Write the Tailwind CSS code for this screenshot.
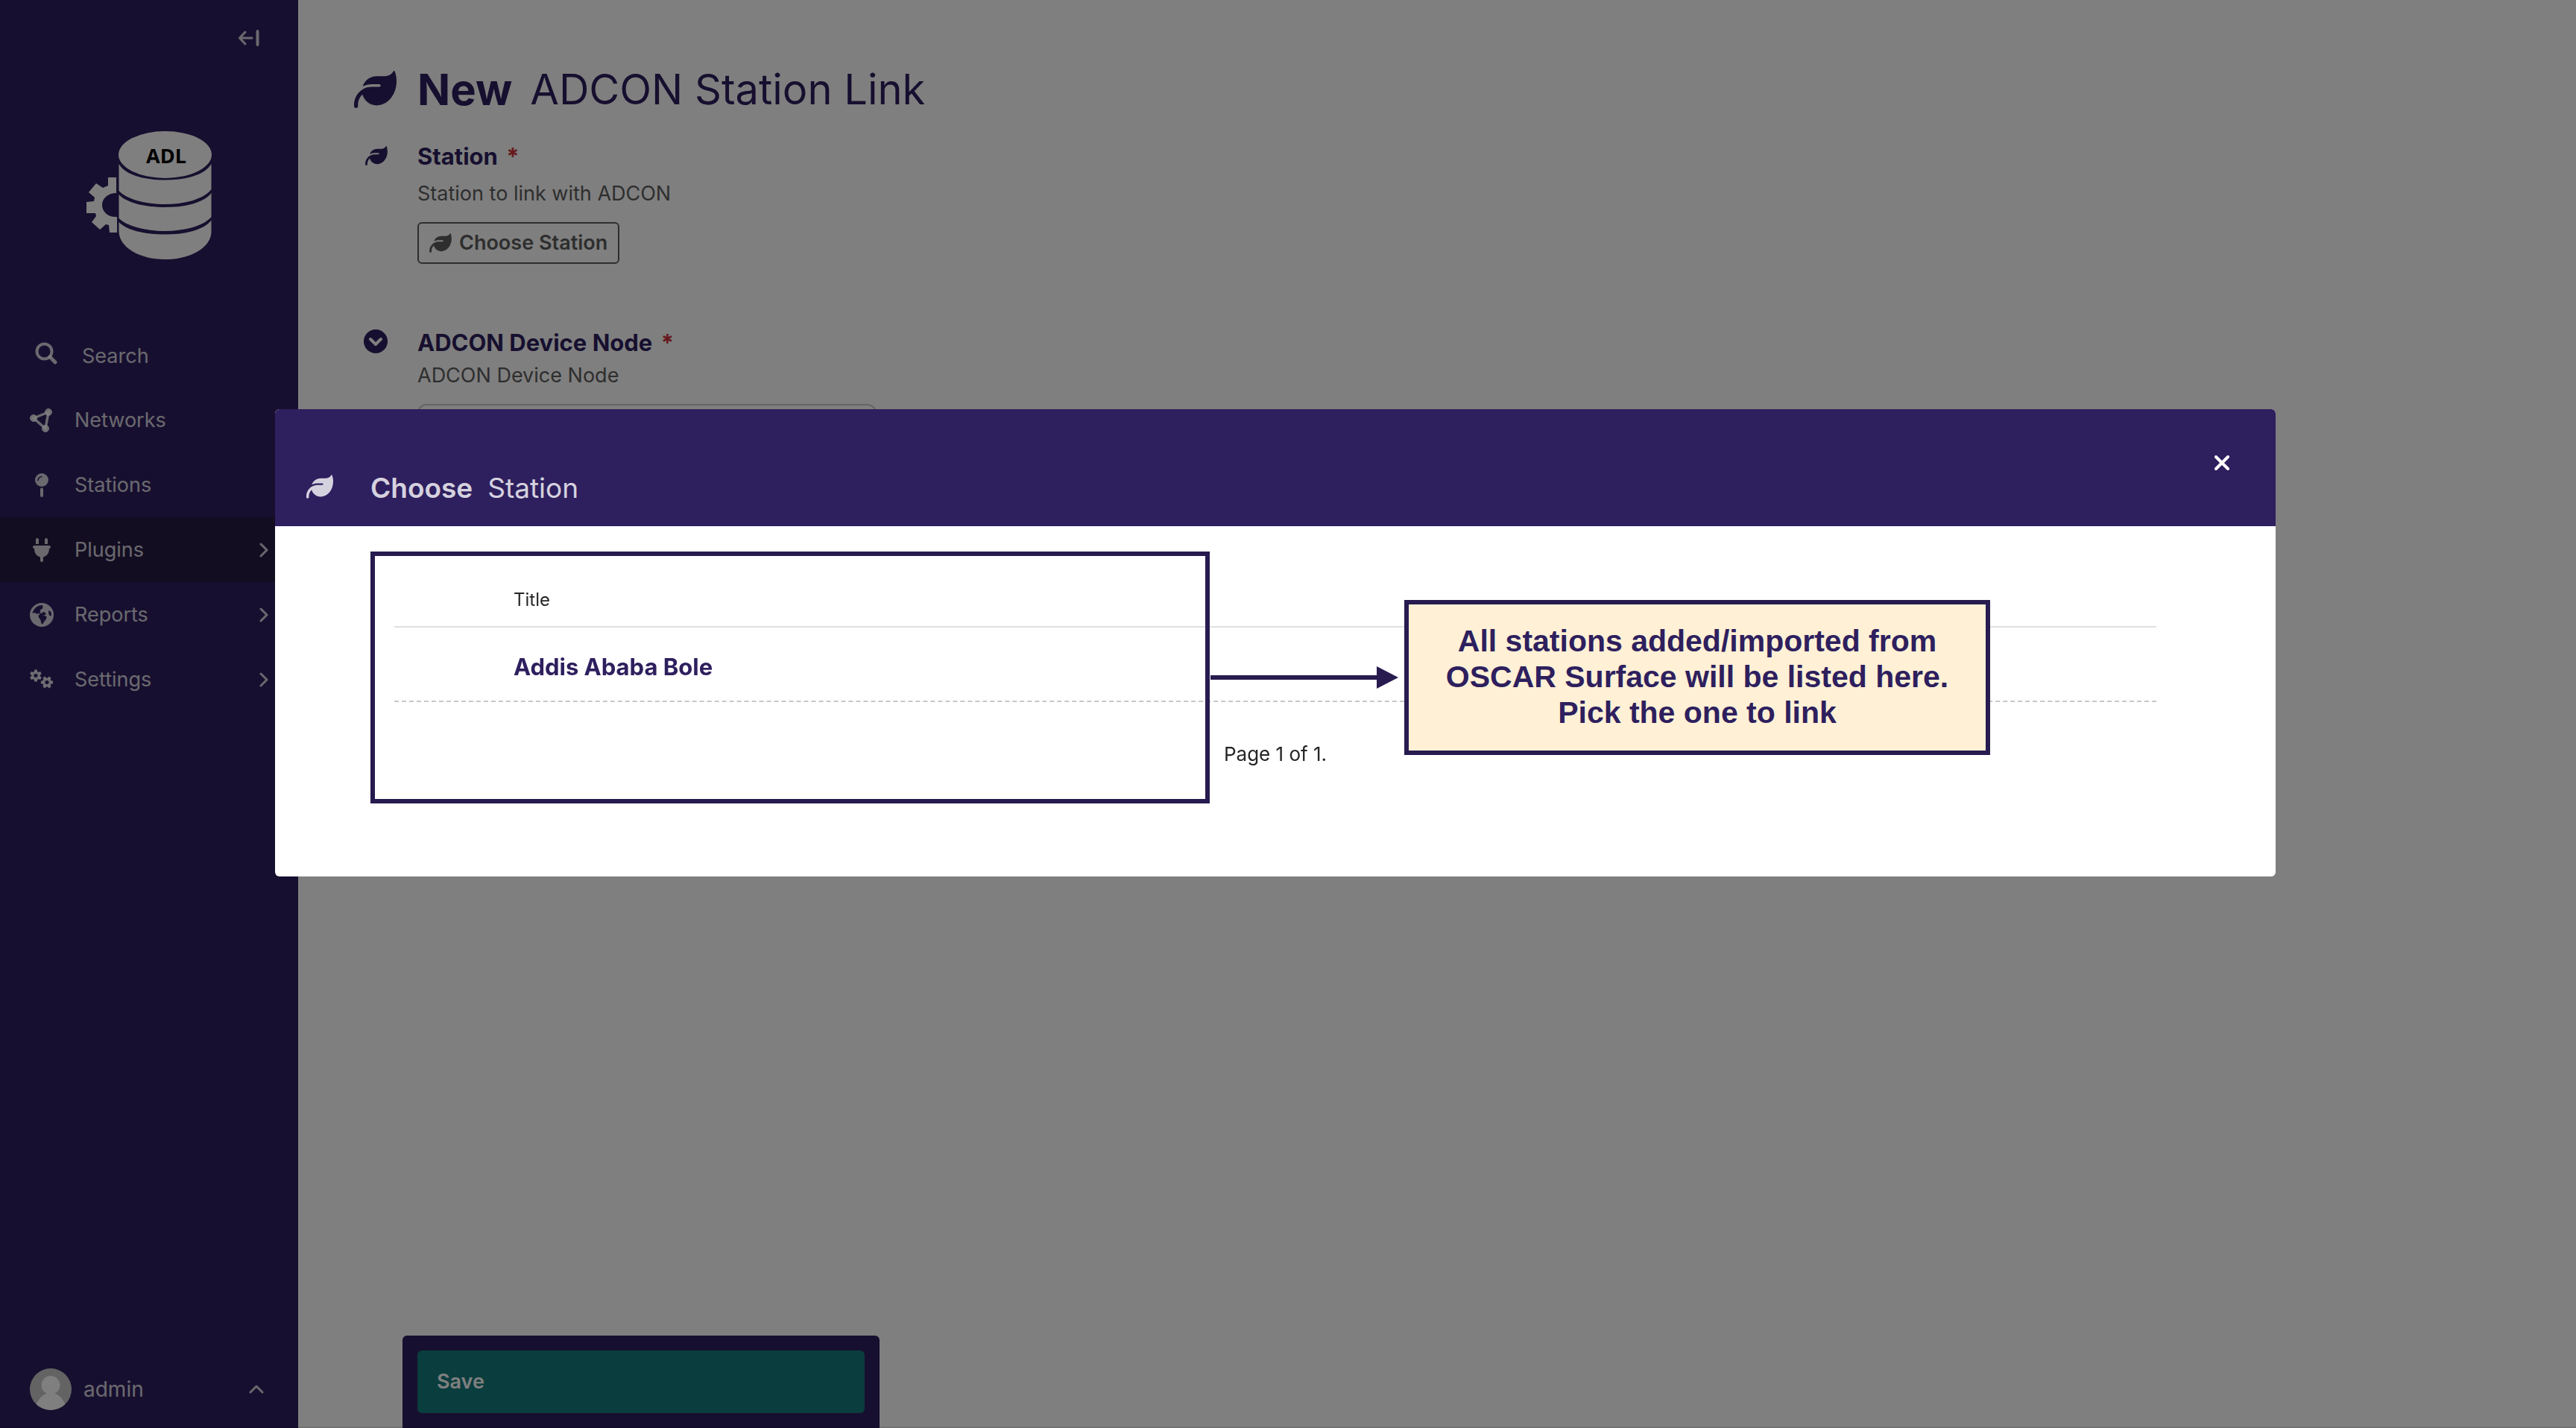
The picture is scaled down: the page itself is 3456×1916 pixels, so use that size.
<!DOCTYPE html>
<html lang="en">
<head>
<meta charset="utf-8">
<title>New ADCON Station Link</title>
<script src="https://cdn.jsdelivr.net/npm/@tailwindcss/browser@4"></script>
</head>
<body class="bg-white font-[Inter,sans-serif] text-[27px] leading-9 text-[#5c5c5c]">
<svg class="hidden" aria-hidden="true">
  <symbol id="leaf" viewBox="0 32 512 448"><path fill="currentColor" d="M272 96c-78.6 0-145.1 51.5-167.7 122.5c33.6-17 71.5-26.5 111.7-26.5h88c8.800 0 16 7.200 16 16s-7.200 16-16 16H216c-16.600 0-32.700 1.900-48.200 5.400c-25.900 5.900-50 16.400-71.400 30.700C38.300 298.800 0 364.900 0 440v16c0 13.300 10.700 24 24 24s24-10.700 24-24V440c0-48.700 20.700-92.500 53.800-123.200C121.600 392.300 190.300 448 272 448h1c132.100-.7 239-130.900 239-291.400c0-42.600-7.500-83.100-21.100-119.600c-2.600-6.900-12.700-6.600-16.200-.1C455.900 72.100 418.700 96 376 96H272z"/></symbol>
  <symbol id="chevron" viewBox="0 0 12 20"><path d="M2 2l8 8-8 8" fill="none" stroke="currentColor" stroke-width="3" stroke-linecap="round" stroke-linejoin="round"/></symbol>
</svg>

<div class="flex min-h-screen">
  <aside class="flex h-screen w-[400px] shrink-0 flex-col bg-[#2e1f5e] text-white/80">
    <button type="button" aria-label="Collapse sidebar" class="mt-10 mr-[52px] self-end">
      <svg class="h-[22px] w-7" viewBox="0 0 28 22" fill="none" stroke="currentColor" stroke-width="3" stroke-linecap="round" stroke-linejoin="round"><path d="M18 11H2M9 3L1.500 11L9 19"/><path d="M25.500 2V20" stroke-width="4"/></svg>
    </button>
    <a href="#" aria-label="ADL home" class="mt-[113px] ml-[116px] text-white">
      <svg class="h-[174px] w-[170px]" viewBox="116 175 170 174" fill="currentColor">
        <ellipse cx="221.500" cy="207.500" rx="62.500" ry="31.500"/>
        <path d="M159.500 220c8 14 32 21.500 62 21.500s54-7.500 62-21.500v34c-10 13-35 20-62 20s-52-7-62-18z"/>
        <path d="M159.500 261c10 11 35 17 62 17s52-6 62-19v32c-10 12-35 19-62 19s-52-7-62-17z"/>
        <path d="M159.500 298c10 11 35 16.500 62 16.500s52-6 62-19v15c0 22-28 37.500-62 37.500s-62-16-62-38z"/>
        <path d="M156 238h-11v11l-7 3-9-6-10 12 8 7-1 5-10 1v15h12l1 4-6 8 11 10 8-7 4 1 1 10h10v-21c-12 1-20-7-20-16s8-16 19-16z"/>
        <text x="223" y="219" text-anchor="middle" class="fill-black font-['Open_Sans',sans-serif] text-[27px] font-bold">ADL</text>
      </svg>
    </a>
    <nav class="mt-[86px] flex flex-col" aria-label="Main">
      <a href="#" class="flex h-[85px] items-center pl-[47px]"><svg class="mb-2 h-[30px] w-[30px]" viewBox="0 0 30 30" fill="none" stroke="currentColor" stroke-width="4" stroke-linecap="round"><circle cx="12.500" cy="12.500" r="10"/><path d="M20 20l7 7" stroke-width="5"/></svg><span class="ml-[33px]">Search</span></a>
      <a href="#" class="flex h-[87px] items-center gap-7 pl-10"><svg class="size-8" viewBox="0 0 32 32" fill="currentColor" stroke="currentColor"><path d="M5 13L25 5L21 27z" fill="none" stroke-width="3.500"/><circle cx="5" cy="13" r="4.500"/><circle cx="25" cy="5" r="4.500"/><circle cx="21" cy="27" r="4.500"/></svg>Networks</a>
      <a href="#" class="flex h-[87px] items-center gap-7 pl-10"><svg class="size-8" viewBox="0 0 32 32" fill="none"><circle cx="16" cy="9" r="9" fill="currentColor"/><path d="M11 9.500a5 5 0 0 1 5-5" stroke="#2e1f5e" stroke-width="1.600" stroke-linecap="round"/><path d="M16 21.500V30" stroke="currentColor" stroke-width="4" stroke-linecap="round"/></svg>Stations</a>
      <a href="#" class="flex h-[87px] items-center gap-7 bg-[#261b45] pr-10 pl-10"><svg class="size-8" viewBox="0 0 32 32" fill="currentColor"><path d="M8 2a2 2 0 0 1 4 0v6H8zM20 2a2 2 0 0 1 4 0v6h-4zM6 10h20a2 2 0 0 1 0 4c0 6-3 10-8 11.500V30a2 2 0 0 1-4 0v-4.500C9 24 6 20 6 14a2 2 0 0 1 0-4z"/></svg><span class="grow">Plugins</span><svg class="h-5 w-3"><use href="#chevron"/></svg></a>
      <a href="#" class="flex h-[87px] items-center gap-7 pr-10 pl-10"><svg class="size-8" viewBox="0 0 32 32"><circle cx="16" cy="16" r="16" fill="currentColor"/><path fill="#2e1f5e" d="M17 3C10 3 5 7.500 3.500 14l3-1 2 1.500 4-.5 2-2.500-1-2 3-1.500 1-2zM12 13.500l4 .5 2-2 3 1 .5 3-3 .5-5-.5zM11.500 16.500l4-1 3 1.500 4 1c.5 3-1.500 5-2.500 6l-3 4.500c-2-.5-2-3-2.500-5.500-1-2-3.500-3.500-3-6.500zM25 11c2-1.500 4 1.500 4 5 0 2-2.500 1.500-3.500-.5z"/></svg><span class="grow">Reports</span><svg class="h-5 w-3"><use href="#chevron"/></svg></a>
      <a href="#" class="flex h-[87px] items-center gap-7 pr-10 pl-10"><svg class="size-8" viewBox="0 0 32 32" fill="none" stroke="currentColor"><g transform="translate(8 10.500)"><circle r="4.300" stroke-width="3.400"/><path d="M0-5V-8M0 5V8M4.300-2.500L7-4M-4.300 2.500L-7 4M4.300 2.500L7 4M-4.300-2.500L-7-4" stroke-width="4"/></g><g transform="translate(23 19.500) rotate(30)"><circle r="4.300" stroke-width="3.400"/><path d="M0-5V-8M0 5V8M4.300-2.500L7-4M-4.300 2.500L-7 4M4.300 2.500L7 4M-4.300-2.500L-7-4" stroke-width="4"/></g></svg><span class="grow">Settings</span><svg class="h-5 w-3"><use href="#chevron"/></svg></a>
    </nav>
    <button type="button" class="mt-auto mb-6 flex items-center px-10 text-left">
      <svg class="size-14" viewBox="0 0 56 56"><clipPath id="disc"><circle cx="28" cy="28" r="28"/></clipPath><g clip-path="url(#disc)"><path fill="#c6c6c6" d="M0 0h56v56H0z"/><circle cx="28" cy="22.500" r="12.500" fill="#fff"/><path fill="#fff" d="M8 50c4-11 11-17 20-17s16 6 20 17v8H8z"/></g></svg>
      <span class="ml-4 grow text-[28px]">admin</span>
      <svg class="mr-[6px] h-3 w-5" viewBox="0 0 20 12"><path d="M2 10l8-8 8 8" fill="none" stroke="currentColor" stroke-width="3" stroke-linecap="round" stroke-linejoin="round"/></svg>
    </button>
  </aside>

  <main class="flex grow flex-col">
    <h1 class="mt-[84px] flex items-center pl-[75px] text-[56px] leading-[72px] text-[#2e1f5e]">
      <svg class="h-[50px] w-[57px]"><use href="#leaf"/></svg>
      <strong class="ml-7 text-[58px] font-bold">New</strong><span class="ml-6 font-normal">ADCON Station Link</span>
    </h1>
    <form class="flex grow flex-col pl-[88px]">
      <div class="mt-[34px] flex">
        <svg class="mt-[6px] ml-[2px] h-[26px] w-[30px] text-[#2e1f5e]"><use href="#leaf"/></svg>
        <div class="ml-10">
          <div class="text-[31px] leading-10 font-bold text-[#2e1f5e]">Station <span class="ml-1 text-[#cd3238]">*</span></div>
          <p class="mt-3">Station to link with ADCON</p>
          <button type="button" class="mt-5 flex h-14 items-center gap-[10px] rounded-md border-2 border-[#5c5c5c] px-[14px] font-semibold"><svg class="h-[26px] w-[30px]"><use href="#leaf"/></svg>Choose Station</button>
        </div>
      </div>
      <div class="mt-[86px] flex">
        <svg class="mt-[2px] size-8" viewBox="0 0 32 32"><circle cx="16" cy="16" r="16" fill="#2e1f5e"/><path d="M9 13l7 7 7-7" fill="none" stroke="#fff" stroke-width="4" stroke-linecap="round" stroke-linejoin="round"/></svg>
        <div class="ml-10">
          <label for="node" class="block text-[31px] leading-10 font-bold text-[#2e1f5e]">ADCON Device Node <span class="ml-1 text-[#cd3238]">*</span></label>
          <p class="mt-[6px]">ADCON Device Node</p>
          <select id="node" class="mt-5 h-20 w-[616px] appearance-none rounded-xl border-2 border-[#c8c8c8]"></select>
        </div>
      </div>
      <div class="mt-auto ml-[52px] w-[640px] self-start rounded-t-md bg-[#2e1f5e] p-5">
        <button type="submit" class="block h-[84px] w-full rounded-md bg-[#157b7b] px-[26px] text-left font-semibold text-white">Save</button>
      </div>
    </form>
  </main>
</div>

<div class="fixed inset-0 border-b-2 border-black/10 bg-black/50 pt-[549px] pr-[403px] pl-[369px]">
  <section role="dialog" aria-label="Choose Station" class="overflow-hidden rounded-md bg-white text-[#262626]">
    <header class="flex h-[157px] justify-between bg-[#2e1f5e] pr-[62px] pl-[42px]">
      <h2 class="mt-[82px] flex h-12 items-center text-[37px] leading-[48px] text-white/80"><svg class="mb-1 h-8 w-9"><use href="#leaf"/></svg><strong class="ml-[50px] font-semibold">Choose</strong><span class="ml-5">Station</span></h2>
      <button type="button" aria-label="Close" class="mt-[62px] h-5 text-white"><svg class="size-5" viewBox="0 0 20 20"><path d="M2 2l16 16M18 2L2 18" stroke="currentColor" stroke-width="4" stroke-linecap="round"/></svg></button>
    </header>
    <div class="relative h-[470px] pt-[72px] pr-[160px] pl-[160px]">
      <table class="w-full border-collapse text-left">
        <thead><tr class="h-[63px] border-b-2 border-[#e0e0e0]"><th class="pb-2 pl-[160px] text-[24px] font-normal">Title</th></tr></thead>
        <tbody><tr class="h-[100px] border-b-2 border-dashed border-[#c8c8c8]"><td class="pt-2 pl-[160px] text-[31px] font-bold text-[#2e1f5e]"><a href="#">Addis Ababa Bole</a></td></tr></tbody>
      </table>
      <p class="mt-[52px] text-center text-[26px]">Page 1 of 1.</p>

      <div class="absolute top-[34px] left-[128px] h-[338px] w-[1126px] border-6 border-[#271b4f]"></div>
      <svg class="absolute top-[188px] left-[1255px] h-[30px] w-[252px]" viewBox="0 0 252 30" fill="#271b4f"><path d="M0 12h223V0l29 15-29 15V18H0z"/></svg>
      <div class="absolute top-[99px] left-[1515px] flex h-[208px] w-[786px] items-center justify-center border-6 border-[#271b4f] bg-[#fff0d6] pb-[2px] text-center font-['Liberation_Sans',sans-serif] text-[41px] leading-[48px] font-bold text-[#2e1f5e]">
        <p>All stations added/imported from<br>OSCAR Surface will be listed here.<br>Pick the one to link</p>
      </div>
    </div>
  </section>
</div>
</body>
</html>
